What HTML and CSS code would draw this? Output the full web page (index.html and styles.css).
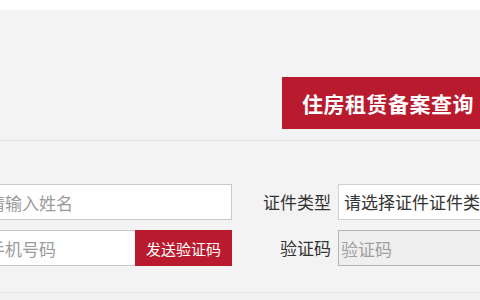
FILE: index.html
```html
<!DOCTYPE html>
<html lang="zh-CN">
<head>
<meta charset="utf-8">
<title>住房租赁备案查询</title>
<link rel="stylesheet" href="styles.css">
</head>
<body>
<div class="topbar"></div>
<div class="stage">
  <div class="wrap">
    <header class="head">
      <h1 class="banner">住房租赁备案查询</h1>
    </header>
    <form class="form">
      <div class="field">
        <input class="input" type="text" placeholder="请输入姓名">
      </div>
      <label class="label">证件类型</label>
      <div class="field">
        <div class="select">请选择证件证件类型</div>
      </div>
      <div class="field phone">
        <input class="input" type="text" placeholder="手机号码">
        <button class="send" type="button">发送验证码</button>
      </div>
      <label class="label">验证码</label>
      <div class="field">
        <input class="input captcha" type="text" placeholder="验证码" disabled>
      </div>
    </form>
  </div>
</div>
</body>
</html>
```
FILE: styles.css
```css
* { box-sizing: border-box; }
html, body {
  margin: 0;
  padding: 0;
  width: 480px;
  height: 300px;
  overflow: hidden;
  background: #f2f2f2;
  font-family: "Noto Sans CJK SC", "Noto Sans", sans-serif;
}
.topbar {
  height: 10px;
  background: #ffffff;
}
.stage {
  display: flex;
  justify-content: center;
  width: 480px;
}
.wrap {
  flex: 0 0 520px;
  width: 520px;
}
.head {
  height: 131px;
  padding-top: 67px;
  border-bottom: 1px solid #e4e4e4;
  display: flex;
  justify-content: flex-end;
  align-items: flex-start;
  background: #f3f3f3;
}
.banner {
  margin: 0 6px 0 0;
  height: 52px;
  width: 212px;
  background: #b91a2d;
  color: #ffffff;
  font-size: 21px;
  font-weight: 700;
  letter-spacing: 0.5px;
  line-height: 52px;
  text-align: center;
}
.form {
  display: grid;
  grid-template-columns: 252px 106px 162px;
  grid-auto-rows: 36px;
  row-gap: 10px;
  padding: 43px 0 26px;
  border-bottom: 1px solid #e6e6e6;
  background: #f3f3f3;
}
.field {
  display: flex;
  height: 36px;
}
.input {
  flex: 1;
  min-width: 0;
  height: 36px;
  margin: 0;
  border: 1px solid #c9c9c9;
  background: #ffffff;
  padding: 0 8px 0 7px;
  font-family: inherit;
  font-size: 17px;
  color: #333;
  outline: none;
}
.input::placeholder {
  color: #9a9a9a;
}
.label {
  align-self: center;
  text-align: right;
  padding-right: 7px;
  font-size: 17px;
  color: #333333;
  line-height: 36px;
}
.select {
  flex: 1;
  height: 36px;
  border: 1px solid #d0d0d0;
  border-right: none;
  background: #ffffff;
  padding-left: 5px;
  font-size: 17px;
  line-height: 34px;
  color: #333333;
  white-space: nowrap;
  overflow: hidden;
}
.phone .input {
  border-right: none;
}
.send {
  flex: 0 0 97px;
  height: 36px;
  margin: 0;
  border: none;
  background: #b91a2d;
  color: #ffffff;
  font-family: inherit;
  font-size: 15px;
  padding: 0;
}
.captcha {
  background: #efefef;
  border: 1px solid #b5b5b5;
  border-right: none;
  padding-left: 2px;
}
.captcha::placeholder {
  color: #a0a0a0;
}
```
